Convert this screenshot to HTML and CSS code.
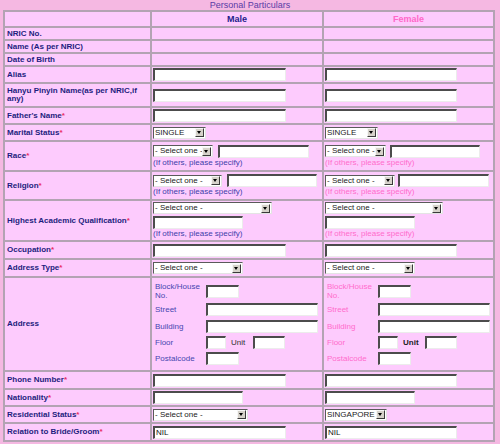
FILE: index.html
```html
<!DOCTYPE html>
<html>
<head>
<meta charset="utf-8">
<link rel="stylesheet" href="styles.css">
</head>
<body>
<div class="title">Personal Particulars</div>
<form class="form" autocomplete="off">
  <div class="c"></div>
  <div class="c hd hm">Male</div>
  <div class="c hd hf">Female</div>

  <div class="c lab">NRIC No.</div>
  <div class="c"></div>
  <div class="c"></div>

  <div class="c lab">Name (As per NRIC)</div>
  <div class="c"></div>
  <div class="c"></div>

  <div class="c lab">Date of Birth</div>
  <div class="c"></div>
  <div class="c"></div>

  <div class="c lab">Alias</div>
  <div class="c"><input class="inp w133"></div>
  <div class="c"><input class="inp w132"></div>

  <div class="c lab">Hanyu Pinyin Name(as per NRIC,if any)</div>
  <div class="c"><input class="inp w133"></div>
  <div class="c"><input class="inp w132"></div>

  <div class="c lab"><span>Father's Name<span class="req">*</span></span></div>
  <div class="c"><input class="inp w133"></div>
  <div class="c"><input class="inp w132"></div>

  <div class="c lab"><span>Marital Status<span class="req">*</span></span></div>
  <div class="c"><div class="sel w53"><span class="sv">SINGLE</span><span class="sb"></span></div></div>
  <div class="c"><div class="sel w53"><span class="sv">SINGLE</span><span class="sb"></span></div></div>

  <div class="c lab"><span>Race<span class="req">*</span></span></div>
  <div class="c">
    <div class="stack">
      <div class="line"><div class="sel w60"><span class="sv">- Select one -</span><span class="sb"></span></div><input class="inp w91 ml5"></div>
      <div class="note">(If others, please specify)</div>
    </div>
  </div>
  <div class="c f">
    <div class="stack">
      <div class="line"><div class="sel w61"><span class="sv">- Select one -</span><span class="sb"></span></div><input class="inp w90 ml4"></div>
      <div class="note">(If others, please specify)</div>
    </div>
  </div>

  <div class="c lab"><span>Religion<span class="req">*</span></span></div>
  <div class="c">
    <div class="stack">
      <div class="line"><div class="sel w69"><span class="sv">- Select one -</span><span class="sb"></span></div><input class="inp w90 ml5"></div>
      <div class="note">(If others, please specify)</div>
    </div>
  </div>
  <div class="c f">
    <div class="stack">
      <div class="line"><div class="sel w70"><span class="sv">- Select one -</span><span class="sb"></span></div><input class="inp w91 ml3"></div>
      <div class="note">(If others, please specify)</div>
    </div>
  </div>

  <div class="c lab"><span>Highest Academic Qualification<span class="req">*</span></span></div>
  <div class="c">
    <div class="stack">
      <div class="sel w119"><span class="sv">- Select one -</span><span class="sb"></span></div>
      <input class="inp w90 mt2">
      <div class="note">(If others, please specify)</div>
    </div>
  </div>
  <div class="c f">
    <div class="stack">
      <div class="sel w118"><span class="sv">- Select one -</span><span class="sb"></span></div>
      <input class="inp w90 mt2">
      <div class="note">(If others, please specify)</div>
    </div>
  </div>

  <div class="c lab"><span>Occupation<span class="req">*</span></span></div>
  <div class="c"><input class="inp w133"></div>
  <div class="c"><input class="inp w132"></div>

  <div class="c lab"><span>Address Type<span class="req">*</span></span></div>
  <div class="c"><div class="sel w90"><span class="sv">- Select one -</span><span class="sb"></span></div></div>
  <div class="c"><div class="sel w90"><span class="sv">- Select one -</span><span class="sb"></span></div></div>

  <div class="c lab">Address</div>
  <div class="c">
    <div class="addr">
      <div class="al">Block/House<br>No.</div><div class="ar"><input class="inp w33"></div>
      <div class="al">Street</div><div class="ar"><input class="inp w112"></div>
      <div class="al">Building</div><div class="ar"><input class="inp w112"></div>
      <div class="al">Floor</div><div class="ar"><input class="inp w20"><span class="unit">Unit</span><input class="inp w32"></div>
      <div class="al">Postalcode</div><div class="ar"><input class="inp w33"></div>
    </div>
  </div>
  <div class="c f">
    <div class="addr">
      <div class="al">Block/House<br>No.</div><div class="ar"><input class="inp w33"></div>
      <div class="al">Street</div><div class="ar"><input class="inp w112"></div>
      <div class="al">Building</div><div class="ar"><input class="inp w112"></div>
      <div class="al">Floor</div><div class="ar"><input class="inp w20"><span class="unit">Unit</span><input class="inp w32"></div>
      <div class="al">Postalcode</div><div class="ar"><input class="inp w33"></div>
    </div>
  </div>

  <div class="c lab"><span>Phone Number<span class="req">*</span></span></div>
  <div class="c"><input class="inp w133"></div>
  <div class="c"><input class="inp w132"></div>

  <div class="c lab"><span>Nationality<span class="req">*</span></span></div>
  <div class="c"><input class="inp w90"></div>
  <div class="c"><input class="inp w90"></div>

  <div class="c lab"><span>Residential Status<span class="req">*</span></span></div>
  <div class="c"><div class="sel w95"><span class="sv">- Select one -</span><span class="sb"></span></div></div>
  <div class="c"><div class="sel w62"><span class="sv">SINGAPORE</span><span class="sb"></span></div></div>

  <div class="c lab"><span>Relation to Bride/Groom<span class="req">*</span></span></div>
  <div class="c"><div class="inp w133 txt">NIL</div></div>
  <div class="c"><div class="inp w132 txt">NIL</div></div>
</form>
</body>
</html>
```
FILE: styles.css
```css
html, body {
  margin: 0;
  padding: 0;
}
body {
  width: 500px;
  height: 444px;
  overflow: hidden;
  background: #f5b8e2;
  font-family: "Liberation Sans", Arial, sans-serif;
}
.title {
  height: 10px;
  line-height: 10px;
  font-size: 9px;
  color: #5a3ca6;
  text-align: center;
}
.form {
  margin: 0 0 0 3px;
  width: 492px;
  box-sizing: border-box;
  display: grid;
  grid-template-columns: 145px 170px 169px;
  grid-template-rows: 14px 11px 11px 11px 15px 22px 15px 15px 28px 27px 39px 16px 16px 92px 16px 15px 15px 16px;
  gap: 2px;
  padding: 2px;
  background: #b3a3b3;
}
.c {
  background: #fdcbfd;
  display: flex;
  align-items: center;
  padding: 0 1px;
  min-width: 0;
  overflow: hidden;
}
.lab {
  font-weight: bold;
  font-size: 8px;
  line-height: 8px;
  color: #1d1d7e;
  padding-left: 2px;
}
.req {
  color: #ea2c64;
}
.hd {
  justify-content: center;
  font-weight: bold;
  font-size: 9px;
}
.hm {
  color: #1d1d8c;
}
.hf {
  color: #ff68c8;
}
.inp {
  -webkit-appearance: none;
  appearance: none;
  display: block;
  box-sizing: border-box;
  height: 13px;
  margin: 0;
  padding: 0 0 0 1px;
  background: #fff;
  border-style: solid;
  border-width: 2px 1px 1px 2px;
  border-color: #4c4c4c #ececec #ececec #4c4c4c;
  font-family: "Liberation Sans", Arial, sans-serif;
  font-size: 8px;
  color: #111;
  outline: none;
}
.txt {
  line-height: 10px;
}
.sel {
  display: flex;
  align-items: center;
  box-sizing: border-box;
  height: 12px;
  background: #fff;
  border-style: solid;
  border-width: 1px;
  border-color: #5a5a5a #e4e4e4 #e4e4e4 #5a5a5a;
  font-size: 8px;
  color: #222;
}
.sv {
  flex: 1;
  padding-left: 1px;
  white-space: nowrap;
  overflow: hidden;
  line-height: 10px;
}
.sb {
  position: relative;
  box-sizing: border-box;
  width: 9px;
  height: 9px;
  margin-right: 1px;
  background: #d6d2ca;
  border-style: solid;
  border-width: 1px;
  border-color: #f6f6f6 #3a3a3a #3a3a3a #f6f6f6;
}
.sb::after {
  content: "";
  position: absolute;
  left: 1px;
  top: 2px;
  border-left: 2.5px solid transparent;
  border-right: 2.5px solid transparent;
  border-top: 3px solid #000;
}
.w20 { width: 20px; }
.w32 { width: 32px; }
.w33 { width: 33px; }
.w53 { width: 53px; }
.w60 { width: 60px; }
.w61 { width: 61px; }
.w62 { width: 62px; }
.w69 { width: 69px; }
.w70 { width: 70px; }
.w90 { width: 90px; }
.w91 { width: 91px; }
.w95 { width: 95px; }
.w112 { width: 112px; }
.w118 { width: 118px; }
.w119 { width: 119px; }
.w132 { width: 132px; }
.w133 { width: 133px; }
.ml3 { margin-left: 3px; }
.ml4 { margin-left: 4px; }
.ml5 { margin-left: 5px; }
.mt2 { margin-top: 2px; }
.stack {
  display: flex;
  flex-direction: column;
}
.line {
  display: flex;
  align-items: center;
}
.note {
  font-size: 8px;
  line-height: 10px;
  color: #4040aa;
  white-space: nowrap;
}
.f .note, .f .al {
  color: #ff6ccc;
}
.addr {
  display: grid;
  grid-template-columns: 51px 112px;
  grid-template-rows: 20px 17px 16px 16px 17px;
  align-items: center;
  padding-left: 2px;
}
.al {
  font-size: 8px;
  line-height: 9px;
  color: #4646b0;
}
.ar {
  display: flex;
  align-items: center;
}
.unit {
  width: 22px;
  margin-left: 5px;
  font-size: 8px;
  color: #333;
}
.f .unit {
  font-weight: bold;
  color: #222;
}
```
